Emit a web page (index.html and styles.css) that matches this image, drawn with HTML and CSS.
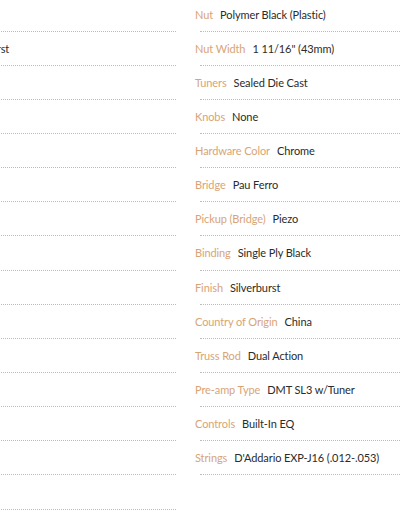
FILE: index.html
```html
<!DOCTYPE html>
<html lang="en">
<head>
<meta charset="utf-8">
<title>Specifications</title>
<link rel="stylesheet" href="styles.css">
</head>
<body>
<div class="specs">
  <ul class="col col-left">
    <li><p class="text"><span class="label">Body</span><span class="value">Cutaway</span></p><span class="rule"></span></li>
    <li><p class="text"><span class="label">Color</span><span class="value">Silverburst</span></p><span class="rule"></span></li>
    <li><p class="text"><span class="label">Top</span><span class="value">Spruce</span></p><span class="rule"></span></li>
    <li><p class="text"><span class="label">Back</span><span class="value">Maple</span></p><span class="rule"></span></li>
    <li><p class="text"><span class="label">Sides</span><span class="value">Maple</span></p><span class="rule"></span></li>
    <li><p class="text"><span class="label">Neck</span><span class="value">Maple</span></p><span class="rule"></span></li>
    <li><p class="text"><span class="label">Frets</span><span class="value">20</span></p><span class="rule"></span></li>
    <li><p class="text"><span class="label">Scale</span><span class="value">25.5"</span></p><span class="rule"></span></li>
    <li><p class="text"><span class="label">Inlays</span><span class="value">Dots</span></p><span class="rule"></span></li>
    <li><p class="text"><span class="label">Rosette</span><span class="value">Inlay</span></p><span class="rule"></span></li>
    <li><p class="text"><span class="label">Joint</span><span class="value">Set</span></p><span class="rule"></span></li>
    <li><p class="text"><span class="label">Bracing</span><span class="value">X</span></p><span class="rule"></span></li>
    <li><p class="text"><span class="label">Case</span><span class="value">None</span></p><span class="rule"></span></li>
    <li><p class="text"><span class="label">Strap</span><span class="value">None</span></p><span class="rule"></span></li>
    <li><p class="text"><span class="label">Guard</span><span class="value">Black</span></p><span class="rule"></span></li>
  </ul>
  <ul class="col col-right">
    <li><p class="text"><span class="label">Nut</span><span class="value">Polymer Black (Plastic)</span></p><span class="rule"></span></li>
    <li><p class="text"><span class="label">Nut Width</span><span class="value">1 11/16" (43mm)</span></p><span class="rule"></span></li>
    <li><p class="text"><span class="label">Tuners</span><span class="value">Sealed Die Cast</span></p><span class="rule"></span></li>
    <li><p class="text"><span class="label">Knobs</span><span class="value">None</span></p><span class="rule"></span></li>
    <li><p class="text"><span class="label">Hardware Color</span><span class="value">Chrome</span></p><span class="rule"></span></li>
    <li><p class="text"><span class="label">Bridge</span><span class="value">Pau Ferro</span></p><span class="rule"></span></li>
    <li><p class="text"><span class="label">Pickup (Bridge)</span><span class="value">Piezo</span></p><span class="rule"></span></li>
    <li><p class="text"><span class="label">Binding</span><span class="value">Single Ply Black</span></p><span class="rule"></span></li>
    <li><p class="text"><span class="label">Finish</span><span class="value">Silverburst</span></p><span class="rule"></span></li>
    <li><p class="text"><span class="label">Country of Origin</span><span class="value">China</span></p><span class="rule"></span></li>
    <li><p class="text"><span class="label">Truss Rod</span><span class="value">Dual Action</span></p><span class="rule"></span></li>
    <li><p class="text"><span class="label">Pre-amp Type</span><span class="value">DMT SL3 w/Tuner</span></p><span class="rule"></span></li>
    <li><p class="text"><span class="label">Controls</span><span class="value">Built-In EQ</span></p><span class="rule"></span></li>
    <li><p class="text"><span class="label">Strings</span><span class="value">D'Addario EXP-J16 (.012-.053)</span></p><span class="rule"></span></li>
  </ul>
</div>
</body>
</html>
```
FILE: styles.css
```css
html, body {
  margin: 0;
  padding: 0;
  width: 400px;
  height: 516px;
  overflow: hidden;
  background: #ffffff;
}

body {
  font-family: "Lato", "Noto Sans", sans-serif;
  font-size: 11px;
  letter-spacing: -0.1px;
  color: #2b2b2b;
}

.specs {
  display: flex;
  gap: 14px;
  margin-left: -74px;
  margin-top: -2.5px;
  width: 526px;
}

.col {
  list-style: none;
  margin: 0;
  padding: 0;
  width: 256px;
  flex: 0 0 256px;
}

.col-left {
  width: 255px;
  flex-basis: 255px;
}

.col li {
  display: flex;
  flex-direction: column;
  padding-top: 8px;
}

.text {
  margin: 0;
  line-height: 17px;
  white-space: nowrap;
}

.label {
  color: #d9a475;
  margin-right: 7px;
}

.value {
  color: #2b2b2b;
}

.rule {
  display: block;
  margin: 8.15px 5px 0;
  border-top: 1px dotted #bcbcbc;
  height: 0;
}
```
